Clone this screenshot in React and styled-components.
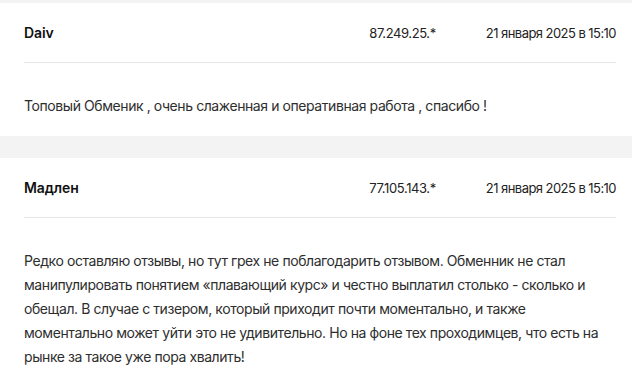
import styled, { createGlobalStyle } from "styled-components";

const GlobalStyle = createGlobalStyle`
  body {
    margin: 0;
    background: #f3f3f3;
    font-family: Inter, "Noto Sans", sans-serif;
    -webkit-font-smoothing: antialiased;
  }
`

const List = styled.div`
  display: flex;
  flex-direction: column;
  gap: 22px;
  padding: 3px 0;
`

const Card = styled.div`
  background: #fff;
  padding: 0 16px 0 24px;
`

const Header = styled.div`
  display: flex;
  align-items: center;
  padding: 20px 0 19px;
  border-bottom: 1px solid #e6e6e6;
  line-height: 20px;
`

const Name = styled.div`
  flex: 1;
  font-size: 14px;
  font-weight: 600;
  color: #111;
  letter-spacing: -0.1px;
`

const Ip = styled.div`
  font-size: 13px;
  color: #222;
  letter-spacing: -0.4px;
`

const Date = styled.div`
  margin-left: 50px;
  font-size: 13px;
  color: #222;
  letter-spacing: -0.55px;
`

const Body = styled.p`
  margin: 0;
  padding: 31px 0 18px;
  font-size: 14px;
  line-height: 24px;
  color: #2e2e2e;
  letter-spacing: -0.42px;
`

const reviews = [
  {
    name: "Daiv",
    ip: "87.249.25.*",
    date: "21 января 2025 в 15:10",
    text: "Топовый Обменик , очень слаженная и оперативная работа , спасибо !",
  },
  {
    name: "Мадлен",
    ip: "77.105.143.*",
    date: "21 января 2025 в 15:10",
    text: "Редко оставляю отзывы, но тут грех не поблагодарить отзывом. Обменник не стал манипулировать понятием «плавающий курс» и честно выплатил столько - сколько и обещал. В случае с тизером, который приходит почти моментально, и также моментально может уйти это не удивительно. Но на фоне тех проходимцев, что есть на рынке за такое уже пора хвалить!",
  },
]

export default function App() {
  return (
    <>
      <GlobalStyle />
      <List>
        {reviews.map((r) => (
          <Card key={r.ip}>
            <Header>
              <Name>{r.name}</Name>
              <Ip>{r.ip}</Ip>
              <Date>{r.date}</Date>
            </Header>
            <Body>{r.text}</Body>
          </Card>
        ))}
      </List>
    </>
  );
}
